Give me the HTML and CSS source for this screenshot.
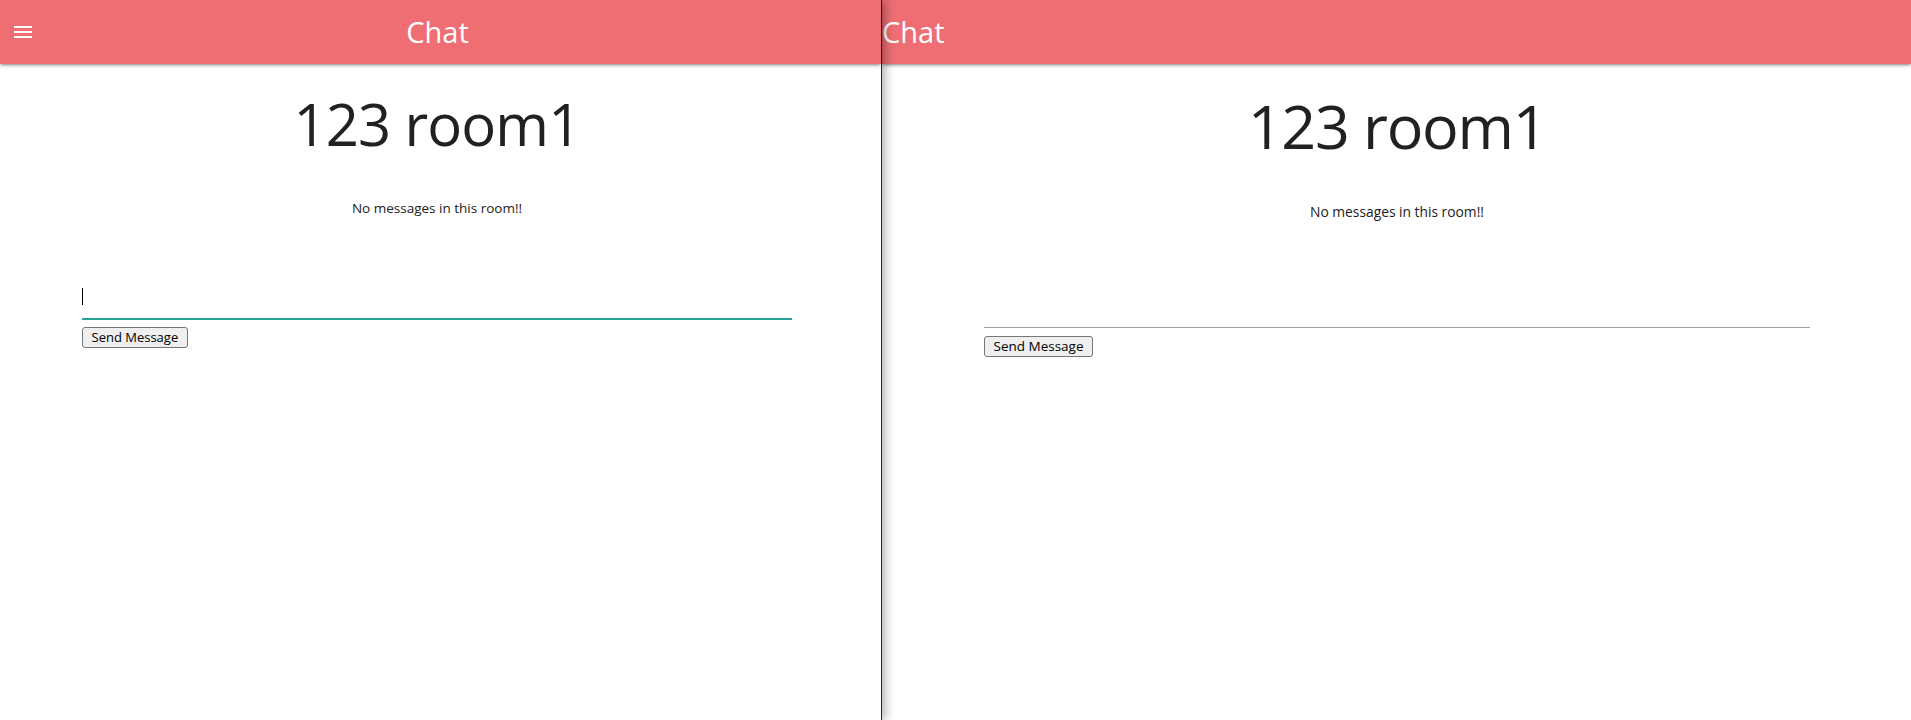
FILE: index.html
```html
<!DOCTYPE html>
<html lang="en">
<head>
<meta charset="utf-8">
<title>Chat</title>
<link rel="stylesheet" href="styles.css">
</head>
<body>
<div class="app">
  <section class="win win-left">
    <header class="bar bar-left">
      <span class="menu">
        <svg width="24" height="24" viewBox="0 0 24 24"><path fill="#fff" d="M3 18h18v-2H3v2zm0-5h18v-2H3v2zm0-7v2h18V6H3z"/></svg>
      </span>
      <span class="title">Chat</span>
      <span></span>
    </header>
    <main class="room room-left">
      <h2 class="room-name">123 room1</h2>
      <p class="empty">No messages in this room!!</p>
      <form class="composer">
        <span class="field">
          <input class="msg msg-active" type="text" autofocus>
          <span class="caret"></span>
        </span>
        <button class="send" type="button">Send Message</button>
      </form>
    </main>
  </section>
  <section class="win win-right">
    <header class="bar bar-right">
      <span class="title">Chat</span>
    </header>
    <main class="room room-right">
      <h2 class="room-name">123 room1</h2>
      <p class="empty">No messages in this room!!</p>
      <form class="composer">
        <span class="field">
          <input class="msg" type="text">
        </span>
        <button class="send" type="button">Send Message</button>
      </form>
    </main>
  </section>
</div>
</body>
</html>
```

FILE: styles.css
```css
html, body {
  margin: 0;
  padding: 0;
  background: #fff;
}

body {
  font-family: "Open Sans", "Noto Sans", sans-serif;
  color: #212121;
  overflow: hidden;
}

.app {
  display: flex;
  height: 720px;
}

.win {
  display: flex;
  flex-direction: column;
  background: #fff;
}

.win-left {
  width: 881px;
  flex: none;
  border-right: 1px solid #262626;
  position: relative;
  z-index: 1;
  box-shadow: 3px 0 10px rgba(0, 0, 0, 0.32);
}

.win-right {
  flex: 1;
}

.bar {
  height: 64px;
  flex: none;
  background: #ef6e74;
  color: #fff;
  box-shadow: 0 2px 2px 0 rgba(0, 0, 0, 0.14), 0 3px 1px -2px rgba(0, 0, 0, 0.12), 0 1px 5px 0 rgba(0, 0, 0, 0.2);
}

.bar-left {
  display: grid;
  grid-template-columns: 1fr auto 1fr;
  align-items: center;
  padding-right: 6px;
}

.bar-right {
  display: flex;
  align-items: center;
  padding-left: 0;
}

.menu {
  display: flex;
  margin-left: 11px;
}

.title {
  font-size: 29px;
  line-height: 64px;
}

.room {
  display: flex;
  flex-direction: column;
}

.room-left {
  padding: 0 89px 0 82px;
}

.room-right {
  padding: 0 101px 0 102px;
}

.room-name {
  margin: 31px 0 0;
  font-weight: 400;
  line-height: 1;
  text-align: center;
}

.room-left .room-name {
  font-size: 58px;
  letter-spacing: -0.9px;
}

.room-right .room-name {
  font-size: 61px;
  letter-spacing: -1.3px;
}

.empty {
  text-align: center;
  line-height: 18px;
  margin: 0;
}

.room-left .empty {
  font-size: 13.5px;
  margin-top: 46px;
}

.room-right .empty {
  font-size: 13.8px;
  margin-top: 47px;
}

.composer {
  display: flex;
  flex-direction: column;
  align-items: flex-start;
  margin: 0;
}

.room-left .composer {
  margin-top: 55px;
}

.room-right .composer {
  margin-top: 59px;
}

.field {
  position: relative;
  display: block;
  width: 100%;
}

.msg {
  display: block;
  box-sizing: border-box;
  width: 100%;
  height: 48px;
  margin: 0;
  padding: 0;
  border: none;
  border-bottom: 1px solid #9e9e9e;
  outline: none;
  background: transparent;
  font-family: "Open Sans", sans-serif;
  font-size: 16px;
  color: #212121;
  caret-color: transparent;
}

.msg-active {
  border-bottom: 2px solid #26a69a;
}

.caret {
  position: absolute;
  left: 0;
  top: 16px;
  width: 1px;
  height: 17px;
  background: #000;
}

.send {
  margin: 0;
  padding: 0 8.5px;
  height: 21px;
  border: 1px solid #767676;
  border-radius: 3px;
  background: #efefef;
  color: #000;
  font-family: "Open Sans", sans-serif;
  font-size: 13px;
  line-height: 17px;
}

.room-left .send {
  margin-top: 7px;
}

.room-right .send {
  margin-top: 8px;
  font-size: 13.5px;
}
```
